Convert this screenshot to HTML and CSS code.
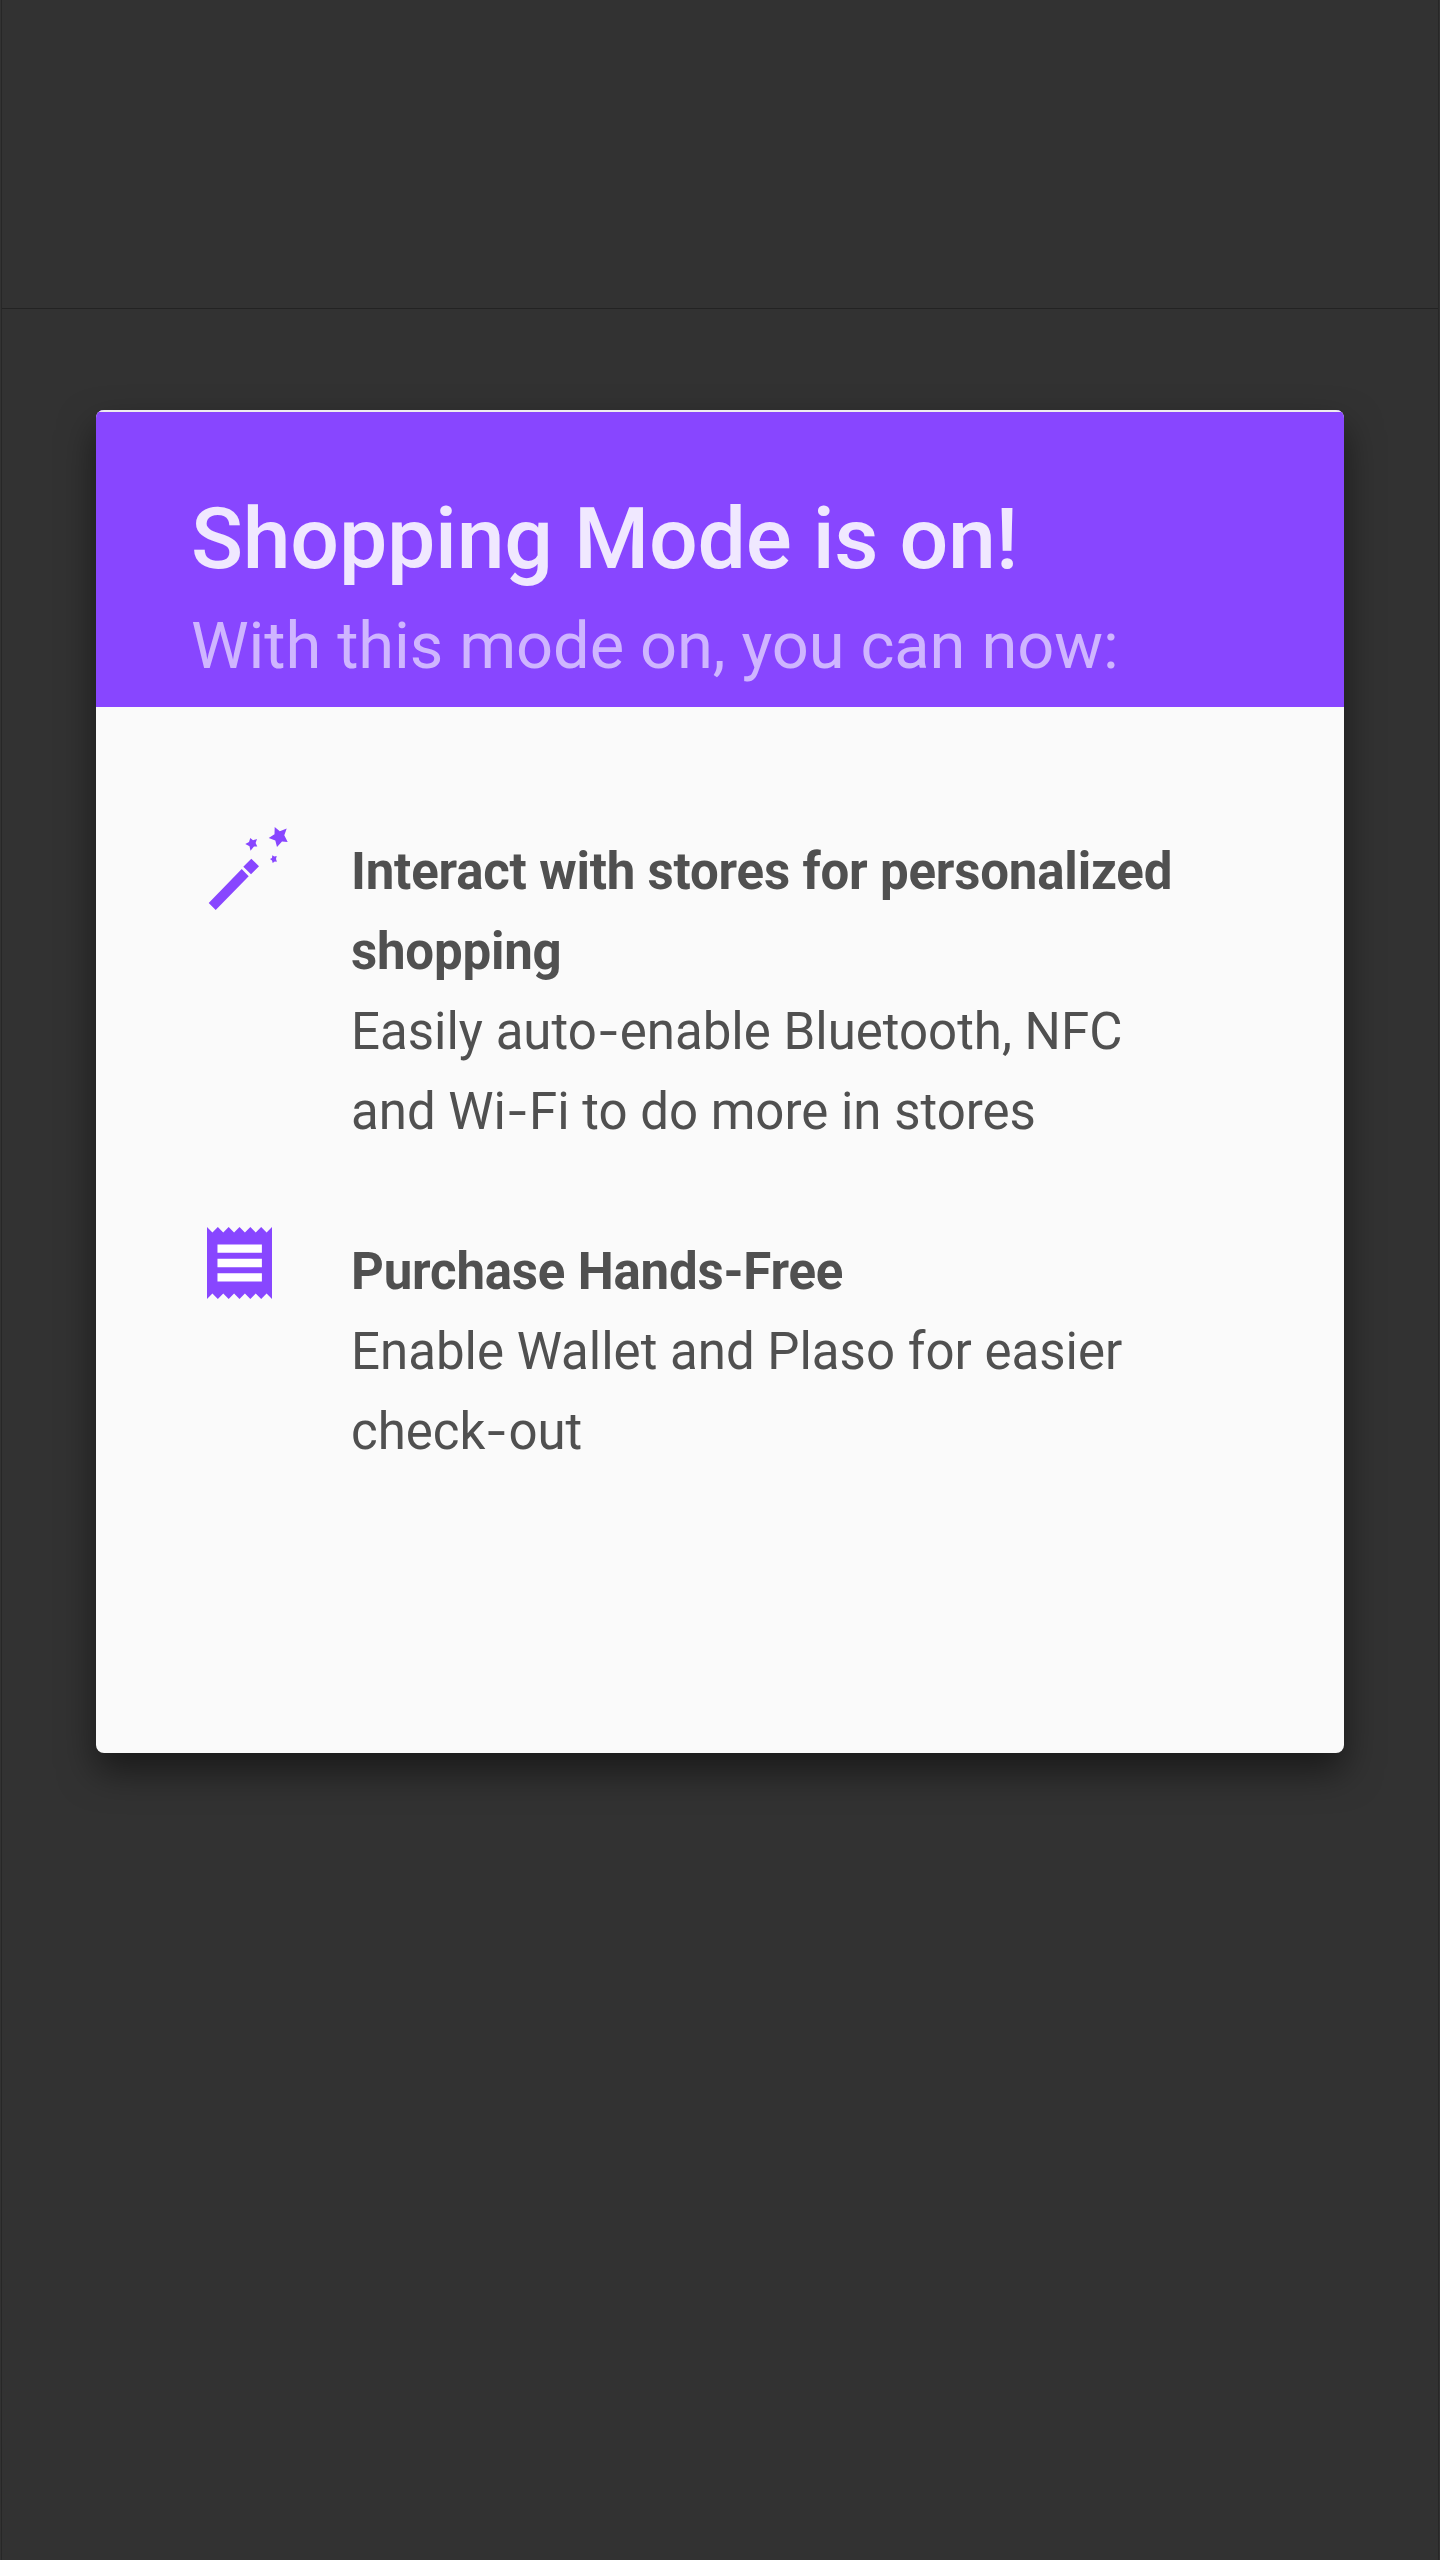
FILE: index.html
```html
<!DOCTYPE html>
<html lang="en"><head><meta charset="utf-8"><title>Shopping Mode</title><link rel="stylesheet" href="styles.css"></head>
<body>
<div class="status"></div>
<main class="screen">
<section class="dialog">
<header class="head"><h1>Shopping Mode is on!</h1><p>With this mode on, you can now:</p></header>
<div class="body">
<article class="item">
<svg class="icon wand" viewBox="0 0 84 88" fill="#8846ff"><path d="M2.700 76 35.700 42 42.700 49.300 9.700 83zM45.300 31.700 53 39.200 45 47.300 37.300 39.700z"/><path d="M68.700 0 73.800 4.200 80.700 1.500 78.300 8.200 81.700 15 76 14.500 71 20 69.300 13.500 62.700 11 68.500 7.300zM44.300 11 47 13.200 51 12 49.600 16 51.300 19.500 48 19.600 44.500 23.700 43.500 19.300 39.300 17 43 15zM66.300 28.300 68.300 29.500 70.700 29 70 32 70.900 34.700 68.700 34.500 66.700 36 66 33.500 64 32 66 31z"/></svg>
<div class="text"><h2>Interact with stores for personalized<br>shopping</h2><p>Easily auto<span class="hyphen">-</span>enable Bluetooth, NFC<br>and Wi<span class="hyphen">-</span>Fi to do more in stores</p></div>
</article>
<article class="item">
<svg class="icon receipt" viewBox="3 2 18 20" preserveAspectRatio="none" fill="#8846ff"><path d="M3 22l1.500-1.500L6 22l1.500-1.500L9 22l1.500-1.500L12 22l1.500-1.500L15 22l1.500-1.500L18 22l1.500-1.500L21 22V2l-1.500 1.500L18 2l-1.500 1.500L15 2l-1.500 1.500L12 2l-1.500 1.500L9 2 7.500 3.500 6 2 4.500 3.500 3 2z"/><path fill="#fff" d="M5.900 6.850h12.300v2.300H5.900zm0 4h12.300v2.300H5.900zm0 4h12.300v2.300H5.900z"/></svg>
<div class="text"><h2>Purchase Hands-Free</h2><p>Enable Wallet and Plaso for easier<br>check<span class="hyphen">-</span>out</p></div>
</article>
</div>
</section>
</main>
</body></html>
```
FILE: styles.css
```css
*{box-sizing:border-box;margin:0;padding:0}
html{background:#323232}
body{width:1438px;height:2560px;margin:0 1px;background:#323232;font-family:Roboto,sans-serif;overflow:hidden;border:solid #272727;border-width:0 1px}
.status{height:309px;border-bottom:1px solid #232323}
.screen{padding:101px 94px 0}
.dialog{height:1343px;border-radius:8px;background:#fafafa;overflow:hidden;box-shadow:0 18px 36px rgba(0,0,0,.5)}
.head{height:297px;background:#8846ff;padding:77px 95px 0;white-space:nowrap;border-top:2px solid #eee}
.head h1{font-size:86px;line-height:100px;font-weight:500;letter-spacing:-.25px;color:#f0e8ff}
.head p{font-size:65px;line-height:80px;margin-top:17px;letter-spacing:-.1px;color:#cfb5ff}
.body{padding:124px 110px}
.item{display:flex;margin-bottom:79px;color:#505050;white-space:nowrap}
.icon{flex:none;margin-top:-4px}
.wand{width:84px;height:88px;margin-right:61px}
.receipt{width:65px;height:72px;margin:-4px 79px 0 1px}
.text{padding-top:1px}
.text h2,.text p{font-size:51px;line-height:80px}
.text h2{font-weight:700;letter-spacing:-.2px}
.hyphen{display:inline-block;width:23px;text-align:center;transform:scaleX(1.3)}
```
